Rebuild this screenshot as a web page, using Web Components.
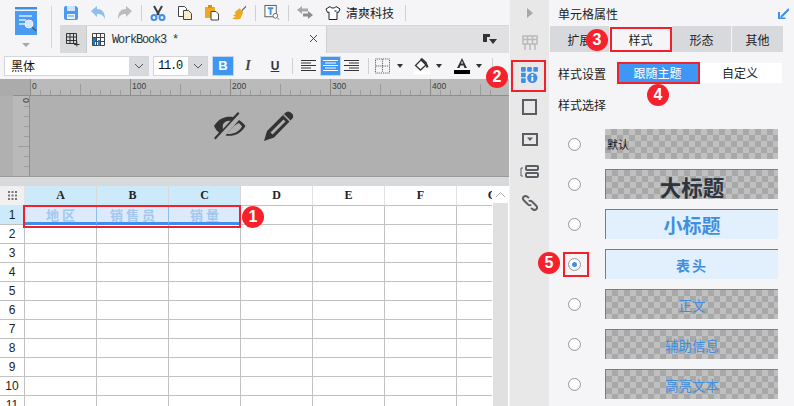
<!DOCTYPE html>
<html lang="zh-CN"><head><meta charset="utf-8"><title>WorkBook3</title>
<style>
html,body{margin:0;padding:0;width:794px;height:406px;overflow:hidden;background:#f5f5f7;font:12px "Noto Sans CJK SC","Liberation Sans",sans-serif;color:#222}
</style></head><body>
<x-app></x-app>
<script>
const I={
save:'<path d="M1 3a2 2 0 0 1 2-2h10l2 2v10a2 2 0 0 1-2 2H3a2 2 0 0 1-2-2z" fill="#4a9bee"/><rect x="4" y="1" width="8" height="5" fill="#cfe4fb"/><rect x="4" y="9" width="8" height="5" fill="#e8f2fd"/><rect x="5" y="10.5" width="6" height="1" fill="#4a9bee"/>',
undo:'<path d="M1 6 7 1v3c5 0 8 3 8 10-2-4-4-5-8-5v3z" fill="#8fbdee"/>',
redo:'<path d="M15 6 9 1v3C4 4 1 7 1 14c2-4 4-5 8-5v3z" fill="#b9bbbe"/>',
cut:'<path d="M4 1l5 9M12 1 7 10" stroke="#3a3f47" stroke-width="2" fill="none"/><circle cx="4" cy="12.500" r="2.500" fill="none" stroke="#3f8fe8" stroke-width="2"/><circle cx="12" cy="12.500" r="2.500" fill="none" stroke="#3f8fe8" stroke-width="2"/>',
copy:'<path d="M1.500 1.500h6l2 2v8h-8z" fill="#fff" stroke="#444"/><path d="M6.500 5.500h5l3 3v6h-8z" fill="#f8edc8" stroke="#444"/>',
paste:'<path d="M1 2h10v11H1z" fill="#f0a91e"/><rect x="4" y="0" width="4" height="3" fill="#d98f10"/><path d="M7 6.500h5l2.500 2.500v6H7z" fill="#fff" stroke="#444"/>',
brush:'<path d="M11 5 16 0v2l-4 4z" fill="#666"/><path d="M9 3l4 4-3 7-4 1-5-1 4-2-3-1 3-2-1-2z" fill="#f0a91e"/>',
tsearch:'<rect x="1" y="1" width="12" height="12" fill="#fff" stroke="#555"/><path d="M4 4h6M7 4v7" stroke="#3f8fe8" stroke-width="2"/><circle cx="12" cy="12" r="2.500" fill="#fff" stroke="#666"/><path d="m14 14 2 2" stroke="#666"/>',
swap:'<path d="M0 5 5 1v2.500h6v3H5V9z" fill="#a6a8ab"/><path d="M16 10l-5-4v2.500H6v3h5V14z" fill="#8b8d90"/>',
shirt:'<path d="M5 1.500 1 4l1.500 3.500L4 7v7.500h8V7l1.500.5L15 4l-4-2.500c-.5 2-5.500 2-6 0z" fill="#fff" stroke="#222"/><rect x="9.500" y="5" width="2" height="2" fill="#3f8fe8"/>',
book:'<path d="M.500.500h12v12H.500zM.500 4.500h12M.500 8.500h12M4.500.500v12M8.500.500v12" fill="none" stroke="#444"/><path d="M1 5h3v3H3v4H1zM6 7h2v6H6z" fill="#1e78c8"/>',
};
const svg=(k,w=16,h=16,vb)=>`<svg width="${w}" height="${h}" viewBox="${vb||'0 0 '+w+' '+h}">${I[k]}</svg>`;
const def=(n,c)=>customElements.define(n,c);
class Base extends HTMLElement{constructor(){super();this.attachShadow({mode:'open'})}}

def('x-badge',class extends Base{connectedCallback(){this.shadowRoot.innerHTML=`<style>:host{position:absolute;left:${this.getAttribute('x')-11}px;top:${this.getAttribute('y')-11}px;width:22px;height:22px;border-radius:50%;background:#f5222d;color:#fff;font:bold 16px/22px "Liberation Sans",sans-serif;text-align:center;display:block;z-index:5}</style><slot></slot>`}});
def('x-redbox',class extends Base{connectedCallback(){const [x,y,w,h]=this.getAttribute('r').split(',');this.shadowRoot.innerHTML=`<style>:host{position:absolute;left:${x}px;top:${y}px;width:${w-4}px;height:${h-4}px;border:2px solid #f0202c;display:block;z-index:4;pointer-events:none}</style>`}});

def('x-tool',class extends Base{connectedCallback(){const w=this.getAttribute('w')||16,ml=this.getAttribute('ml')||0;this.shadowRoot.innerHTML=`<style>:host{display:flex;align-items:center;justify-content:center;flex:none;width:${w}px;margin-left:${ml}px;height:100%}</style><slot></slot>`}});
def('x-sep',class extends Base{connectedCallback(){const ml=this.getAttribute('ml')||0,h=this.getAttribute('h')||16;this.shadowRoot.innerHTML=`<style>:host{display:block;flex:none;width:1px;height:${h}px;background:#cfd0d3;margin-left:${ml}px}</style>`}});

def('x-topbar',class extends Base{connectedCallback(){this.shadowRoot.innerHTML=`<style>
:host{display:block;height:53px;background:#f5f5f7;flex:none}
.wrap{display:flex;height:53px}
.logo{width:51px;flex:none;display:flex;flex-direction:column;align-items:center;padding-top:7px;box-sizing:border-box}
.logo svg{display:block}
.arr{margin-top:7px;width:0;height:0;border:4px solid transparent;border-top:4px solid #a5a7aa;border-bottom:0}
.vs{width:1px;height:42px;background:#d4d5d8;margin-top:6px;flex:none}
.right{flex:1;display:flex;flex-direction:column}
.r1{height:25px;display:flex;align-items:center;box-sizing:border-box;padding-left:11px}
.r2{height:28px;display:flex;background:#e0e0e2;border-top:1px solid #d8d8da;box-sizing:border-box;margin-left:8px}
.new{width:27px;background:#d9dadc;display:flex;align-items:center;justify-content:center;border-right:1px solid #c9cacc;box-sizing:border-box}
.tab{width:240px;background:#f5f5f7;border-right:1px solid #d0d0d2;box-sizing:border-box;display:flex;align-items:center;padding-left:5px;font:12px "Liberation Mono",monospace;color:#333;position:relative}
.tab span{margin-left:7px;letter-spacing:-1.200px}
.x{position:absolute;left:222px;top:7px}
.pin{margin-left:156px;display:flex;align-items:center}
.name{font-size:12px;color:#222;margin-left:5px;white-space:nowrap}
</style><div class="wrap"><div class="logo"><svg width="22" height="29" viewBox="0 0 22 29"><rect width="22" height="2.500" fill="#3f8fe8"/><path d="M0 4h22v24H0z" fill="#4a9bf2"/><path d="M4 9h13M4 13h7M4 17h7" stroke="#dcecfd" stroke-width="1.500"/><circle cx="14" cy="17" r="4" fill="#d4e6fa" stroke="#eef"/><path d="m17 20 4 4" stroke="#555" stroke-width="1.500"/></svg><div class="arr"></div></div><div class="vs"></div>
<div class="right"><div class="r1">
<x-tool>${svg('save')}</x-tool><x-tool ml="11">${svg('undo')}</x-tool><x-tool ml="11">${svg('redo')}</x-tool><x-sep ml="8"></x-sep><x-tool ml="8">${svg('cut')}</x-tool><x-tool ml="11">${svg('copy')}</x-tool><x-tool ml="11">${svg('paste')}</x-tool><x-tool ml="11">${svg('brush',17,16)}</x-tool><x-sep ml="8"></x-sep><x-tool ml="8">${svg('tsearch',17,17)}</x-tool><x-sep ml="8"></x-sep><x-tool ml="8">${svg('swap')}</x-tool><x-tool ml="12">${svg('shirt')}</x-tool><span class="name">清爽科技</span><x-sep ml="11"></x-sep></div>
<div class="r2"><div class="new"><svg width="14" height="14" viewBox="0 0 14 14"><path d="M.500.500h10v10H.500zM.500 4h10M.500 7.500h10M4 .500v10M7.500.500v10" fill="none" stroke="#333"/><path d="M8 11.500h5.500M10.800 8.500v5" stroke="#333"/></svg></div>
<div class="tab"><svg width="13" height="13" viewBox="0 0 13 13">${I.book}</svg><span>WorkBook3 *</span><svg class="x" width="9" height="12" viewBox="0 0 9 12"><path d="m1 2 7 7M8 2 1 9" stroke="#444" fill="none"/></svg></div>
<div class="pin"><svg width="14" height="12" viewBox="0 0 14 12"><path d="M0 0h7v3H4v5H0z" fill="#333"/><path d="M6 5h8l-4 5z" fill="#333"/></svg></div></div></div></div>`;
}});

def('x-format',class extends Base{connectedCallback(){
const al=(v,c)=>`<svg width="15" height="14" viewBox="0 0 15 14">${v.map((p,i)=>`<path d="M${p[0]} ${i*2.500+1.500}h${p[1]}" stroke="${c}"/>`).join('')}</svg>`;
const dd='<div style="width:0;height:0;border:3.500px solid transparent;border-top:4px solid #333;border-bottom:0"></div>';
const chev='<svg width="10" height="6"><path d="m1 1 4 4 4-4" fill="none" stroke="#555"/></svg>';
this.shadowRoot.innerHTML=`<style>
:host{display:flex;height:26px;flex:none;background:#f5f5f7;align-items:center;padding-left:4px;box-sizing:border-box}
.sel{display:flex;height:20px;border:1px solid #d4d5d8;box-sizing:border-box;background:#fff;flex:none}
.v{flex:1;color:#111;font-size:12px;line-height:18px;padding-left:6px;white-space:nowrap;overflow:hidden}
.a{width:19px;background:#d8d9dd;display:flex;align-items:center;justify-content:center}
.b{flex:none;width:22px;height:20px;background:#3f97f5;border:1px solid #c4d7ea;box-sizing:border-box;color:#fff;font:bold 13px/18px "Liberation Sans",sans-serif;text-align:center;margin-left:4px}
.i{font:italic bold 14px "Liberation Serif",serif;color:#444}
.u{font:bold 12px "Liberation Sans",sans-serif;color:#333;text-decoration:underline}
.act{flex:none;width:21px;height:20px;background:#3f97f5;border:1px solid #c4d7ea;box-sizing:border-box;display:flex;align-items:center;justify-content:center}
</style>
<div class="sel" style="width:145px"><div class="v">黑体</div><div class="a">${chev}</div></div>
<div class="sel" style="width:55px;margin-left:4px"><div class="v" style="font:12px/18px 'Liberation Mono',monospace;padding-left:4px;letter-spacing:-1.200px">11.0</div><div class="a">${chev}</div></div>
<div class="b">B</div>
<x-tool w="16" ml="6"><span class="i">I</span></x-tool>
<x-tool w="16" ml="11"><span class="u">U</span></x-tool>
<x-sep ml="9"></x-sep>
<x-tool w="15" ml="8">${al([[0,15],[0,10],[0,15],[0,10],[0,15]],'#333')}</x-tool>
<div class="act" style="margin-left:4px">${al([[0,15],[2,11],[0,15],[2,11],[0,15]],'#fff')}</div>
<x-tool w="15" ml="3">${al([[0,15],[5,10],[0,15],[5,10],[0,15]],'#333')}</x-tool>
<x-sep ml="9"></x-sep>
<x-tool w="15" ml="6"><svg width="16" height="16" viewBox="0 0 16 16"><path d="M.500.500h15v15H.500zM8 1v14M1 8h14" fill="none" stroke="#444" stroke-dasharray="1 1"/></svg></x-tool>
<x-tool w="8" ml="6">${dd}</x-tool>
<x-tool w="16" ml="10"><svg width="16" height="17" viewBox="0 0 16 17"><rect y="12.500" width="16" height="4" fill="#fff"/><path d="M7 2 1.500 7.500 6.500 12 12 7z" fill="#fff" stroke="#333" stroke-width="1.300"/><path d="M6 1l2-1 4.500 4 2 5-2 1-1-4z" fill="#333"/></svg></x-tool>
<x-tool w="8" ml="5">${dd}</x-tool>
<x-tool w="16" ml="11"><svg width="16" height="17" viewBox="0 0 16 17"><path d="M3 10 8 0l5 10h-2.500l-1-2.500h-3L5.500 10zM7 5.500h2L8 3z" fill="#333" fill-rule="evenodd"/><rect y="12" width="16" height="4" fill="#000"/></svg></x-tool>
<x-tool w="8" ml="5">${dd}</x-tool>
<x-sep ml="9"></x-sep>`}});

def('x-design',class extends Base{connectedCallback(){
let t='';for(let x=0;x<470;x+=10){const h=x%100==0?16:x%50==0?11:5;t+=`<path d="M${30.5+x} ${16-h}V16" stroke="${x%100==0?'#8a8a8a':'#9c9c9c'}"/>`;}
let labels='';for(let i=0;i<5;i++)labels+=`<text x="${32+i*100}" y="10" font-size="8.500" fill="#3a3a3a" font-family="Liberation Sans,sans-serif">${i*100}</text>`;
let lt='';for(let y=10;y<80;y+=10){lt+=`<path d="M${y%50==0?5:11} ${y+.5}H16" stroke="#9c9c9c"/>`}
this.shadowRoot.innerHTML=`<style>:host{display:block;flex:none;height:97px;background:#b0b0b0;position:relative;overflow:hidden}
.top{display:block;height:17px;width:100%}
.left{position:absolute;left:13px;top:17px;width:17px;height:80px;background:#b9b9b9}
.ic{position:absolute;left:213px;top:32px;display:flex;gap:18px;align-items:center}
</style>
<svg class="top" viewBox="0 0 509 17"><rect width="509" height="17" fill="#bababa"/><rect width="30" height="17" fill="#ababab"/><rect y="16" x="13" width="496" height="1" fill="#8e8e8e"/>${t}${labels}</svg>
<div class="left"><svg width="17" height="80" viewBox="0 0 17 80"><text transform="translate(10,2) rotate(90)" font-size="8.500" fill="#3a3a3a" font-family="Liberation Sans,sans-serif">0</text>${lt}<path d="M16.500 0V80" stroke="#8e8e8e"/></svg></div>
<div class="ic"><svg width="33" height="30" viewBox="0 0 33 30"><path d="M1 15C6 7 13 5 20 6l5-5 1.500 1.500-24 26L1 27l5-5.500C4 20 2 17.500 1 15zM14 10a6 6 0 0 0-4 8l1.600-1.700 6-6.500zM26 9c3 2 5 4 6.500 6C28 23 20 26 12.500 24.500zM21 15l-7 8c6 .5 12-2 15-7.500-1-1.500-2-2.500-3.500-3.500z" fill="#333" fill-rule="evenodd"/></svg>
<svg width="30" height="30" viewBox="0 0 30 30"><path d="M0 30 3 20 21 2q3-3 6.500 0t0 6.500L10 26.500z" fill="#333"/><path d="M6.500 21.500 19.500 8.500l2 2L8.500 23.500z" fill="#b0b0b0"/><path d="M19.500 3.500l7 7" stroke="#b0b0b0" stroke-width="1.500"/></svg></div>`}});

def('x-sheet',class extends Base{connectedCallback(){
const cols=['A','B','C','D','E','F','G'];
let h=`<div class="c corner"><svg width="11" height="11"><g fill="#777">${[1,4.5,8].flatMap(a=>[1,4.5,8].map(b=>`<rect x="${a}" y="${b}" width="2" height="2"/>`)).join('')}</g></svg></div>`;
cols.forEach((c,i)=>h+=`<div class="c hd${i<3?' on':''}">${c}</div>`);
const texts=['地区','销售员','销量'];
for(let r=1;r<=11;r++){h+=`<div class="c rh${r==1?' on':''}">${r}</div>`;
 cols.forEach((c,i)=>{h+=`<div class="c${r==1&&i<3?' sel':''}">${r==1&&i<3?texts[i]:''}</div>`})}
this.shadowRoot.innerHTML=`<style>
:host{display:flex;flex:1;min-height:0;background:#fff;overflow:hidden}
.g{flex:none;width:492px;overflow:hidden;display:grid;grid-template-columns:25px repeat(7,72px);grid-template-rows:20px;grid-auto-rows:19px;align-content:start}
.c{box-sizing:border-box;border-right:1px solid #c2c2c2;border-bottom:1px solid #c2c2c2;background:#fff;display:flex;align-items:center;justify-content:center;white-space:nowrap}
.hd{font:12px "Liberation Serif",serif;font-weight:bold;color:#222;border-right-color:#e2e2e2;overflow:hidden}
.rh{font:12px "Liberation Sans",sans-serif;color:#222}
.corner{background:#f0f0f0;border-color:#e4e4e4}
.hd.on{background:#cdeafa;border-right-color:#d8d8d8}
.rh.on{background:#cdeafa}
.sel{background:#dceafb;border-right-color:#8cbdf0;border-bottom:3px solid #3f8df0;color:#a2c8ee;font:bold 13px "Noto Sans CJK SC",sans-serif;letter-spacing:3px;padding:1px 0 0 3px}
.sb{flex:none;width:15px;margin-left:1px;background:#e0e0e0;display:flex;flex-direction:column}
.up{height:17px;background:#fff;display:flex;align-items:center;justify-content:center}
</style><div class="g">${h}</div><div class="sb"><div class="up"><svg width="11" height="7"><path d="m1 6 4.500-4.500L10 6" fill="none" stroke="#aaa"/></svg></div></div>`}});

def('x-rail',class extends Base{connectedCallback(){
this.shadowRoot.innerHTML=`<style>:host{display:flex;flex-direction:column;align-items:center;width:40px;flex:none;background:#e8e8e9;box-sizing:border-box;border-left:1px solid #f4f4f4}
.i{display:flex;align-items:center;justify-content:center;flex:none}</style>
<div class="i" style="height:25px"><svg width="6" height="10"><path d="M0 0 6 5 0 10z" fill="#a6a8ab"/></svg></div>
<div class="i" style="height:35px"><svg width="16" height="16" viewBox="0 0 16 16"><path d="M1 1h14v8H1zM1 4.500h14M5.500 1v8M10.500 1v8M3 9v6M8 9v6M13 9v6" fill="none" stroke="#b7b9bc" stroke-width="1.500"/></svg></div>
<div class="i" style="height:30px"><svg width="17" height="16" viewBox="0 0 18 17"><g fill="#3f8fe8"><rect width="5" height="5" rx="1"/><rect x="6.500" width="5" height="5" rx="1"/><rect x="13" width="5" height="5" rx="1"/><rect y="6" width="5" height="5" rx="1"/><rect y="12" width="5" height="5" rx="1"/><circle cx="12" cy="11.500" r="5.500"/></g><rect x="11" y="10.500" width="2" height="4.500" fill="#fff"/><rect x="11" y="7.500" width="2" height="2" fill="#fff"/></svg></div>
<div class="i" style="height:34px"><svg width="15" height="16"><path d="M1 1h13v14H1z" fill="none" stroke="#5a5d64" stroke-width="2"/></svg></div>
<div class="i" style="height:30px"><svg width="16" height="13"><path d="M1 1h14v11H1z" fill="none" stroke="#5a5d64" stroke-width="2"/><path d="M5 4.500h6L8 8z" fill="#5a5d64"/></svg></div>
<div class="i" style="height:34px"><svg width="19" height="13"><path d="M3 3H1v8h2" fill="none" stroke="#5a5d64"/><rect x="6" y="1" width="12" height="4" rx="1" fill="none" stroke="#5a5d64" stroke-width="2"/><rect x="6" y="8" width="12" height="4" rx="1" fill="none" stroke="#5a5d64" stroke-width="2"/></svg></div>
<div class="i" style="height:30px"><svg width="16" height="16" viewBox="0 0 16 16"><path d="M7 3 5 1.500Q3 .5 1.500 2t.5 3.500l4 4q2 1.500 3 0M9 13l2 1.500q2 1 3.500-.5t-.5-3.500l-4-4q-2-1.500-3 0" fill="none" stroke="#5a5d64" stroke-width="2"/></svg></div>`}});

def('x-tabs',class extends Base{connectedCallback(){
const items=['扩展','样式','形态','其他'],w=[60,62,60,51];
this.shadowRoot.innerHTML=`<style>:host{display:flex;flex:none;height:26px;margin-left:1px;width:234px;background:#f5f5f7;gap:1px}
div{background:#d8d9dd;display:flex;align-items:center;justify-content:center;font-size:12px;color:#222;flex:none}
.on{background:#f5f5f7}</style>${items.map((t,i)=>`<div class="${i==1?'on':''}" style="width:${w[i]-(i==3?0:1)}px">${t}</div>`).join('')}`}});

def('x-option',class extends Base{connectedCallback(){
const k=this.getAttribute('k');const on=this.hasAttribute('on');
const bd='border:solid #3f8ad8;border-width:1px 0 0 1px;';
const S={def:'justify-content:flex-start;padding-left:2px;font-size:11px;color:#111',
big:'font-size:21.500px;font-weight:bold;color:#2c3440;padding-top:3px;'+bd,
small:'font-size:19px;font-weight:bold;color:#3f8fe0;background:#e2f0fd;'+bd,
head:'font-size:14px;font-weight:bold;letter-spacing:2px;color:#3f8fe0;background:#e2f0fd;'+bd,
body:'font-size:13.500px;color:#3f8fe0;'+bd}[k];
this.shadowRoot.innerHTML=`<style>:host{display:flex;align-items:center;height:30px;margin-bottom:10px}
.r{margin-left:19px;width:13px;height:13px;border-radius:50%;box-sizing:border-box;border:1px solid #9b9b9b;background:radial-gradient(circle at 50% 40%,#fff 40%,#e6e6e6);display:flex;align-items:center;justify-content:center;flex:none}
.r i{width:5px;height:5px;border-radius:50%;background:#3f8fe8;display:${on?'block':'none'}}
.t{margin-left:24px;width:173px;height:30px;box-sizing:border-box;display:flex;align-items:center;justify-content:center;flex:none;overflow:hidden;
background-color:#c0c0c0;background-image:conic-gradient(#a8a8a8 25%,transparent 0 50%,#a8a8a8 0 75%,transparent 0);background-size:12px 12px;${S}}
</style><div class="r"><i></i></div><div class="t"><slot></slot></div>`}});

def('x-panel',class extends Base{connectedCallback(){
this.shadowRoot.innerHTML=`<style>:host{display:flex;flex-direction:column;flex:1;background:#f5f5f7;min-width:0;overflow:hidden}
.ti{height:26px;display:flex;align-items:center;justify-content:space-between;padding:0 5px 0 9px;font-size:12px;color:#222;flex:none}
.row{display:flex;align-items:center;height:20px;margin-top:11px;padding-left:9px;font-size:12px;flex:none}
.seg{margin-left:11px;display:flex;font-size:12px;height:20px;line-height:20px;text-align:center}
.seg .a{width:81px;background:#3f97f5;color:#fff}
.seg .b{width:84px;background:#fff;color:#222}
.lab{height:20px;margin-top:11px;padding-left:9px;font-size:12px;display:flex;align-items:center;flex:none}
.l{margin-top:15px;flex:none}
</style>
<div class="ti"><span>单元格属性</span><svg width="11" height="11" viewBox="0 0 11 11"><path d="M11 1 3 9M1 4v6.500h6.500" fill="none" stroke="#3f8fe8" stroke-width="2"/></svg></div>
<x-tabs></x-tabs>
<div class="row"><span>样式设置</span><div class="seg"><div class="a">跟随主题</div><div class="b">自定义</div></div></div>
<div class="lab">样式选择</div>
<div class="l"><x-option k="def">默认</x-option><x-option k="big">大标题</x-option><x-option k="small">小标题</x-option><x-option k="head" on>表头</x-option><x-option k="body">正文</x-option><x-option k="body">辅助信息</x-option><x-option k="body">高亮文本</x-option></div>`}});

def('x-app',class extends Base{connectedCallback(){
this.shadowRoot.innerHTML=`<style>:host{display:flex;width:794px;height:406px;position:relative;overflow:hidden}
.left{width:509px;flex:none;display:flex;flex-direction:column;background:#e6e6e7}
.band{height:10px;background:#d8d9db;flex:none;border-top:1px solid #9a9a9a;box-sizing:border-box}
</style>
<div class="left"><x-topbar></x-topbar><x-format></x-format><x-design></x-design><div class="band"></div><x-sheet></x-sheet></div>
<x-rail></x-rail><x-panel></x-panel>
<x-redbox r="23,205,218,23"></x-redbox><x-redbox r="511,60,35,32"></x-redbox><x-redbox r="610,27,62,25"></x-redbox><x-redbox r="617,62,83,22"></x-redbox><x-redbox r="563,252,26,25"></x-redbox>
<x-badge x="253" y="217">1</x-badge><x-badge x="497" y="77">2</x-badge><x-badge x="597" y="40">3</x-badge><x-badge x="658" y="95">4</x-badge><x-badge x="549" y="263">5</x-badge>`}});
</script></body></html>
